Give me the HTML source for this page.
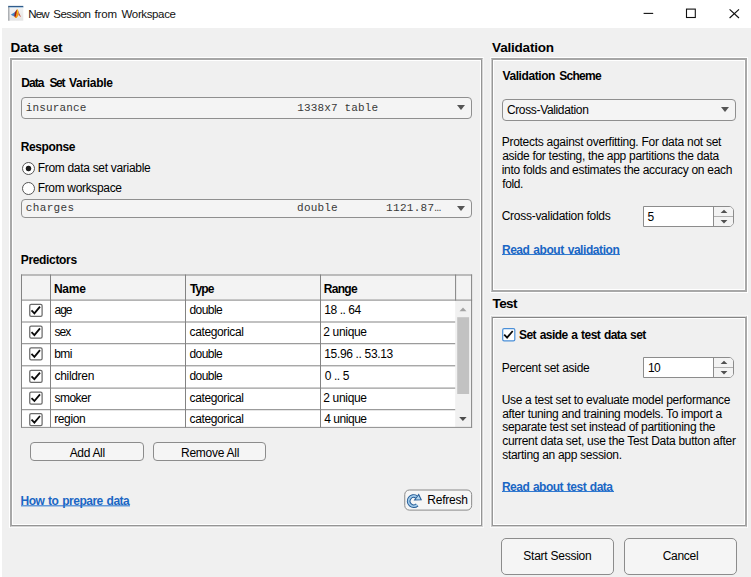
<!DOCTYPE html>
<html>
<head>
<meta charset="utf-8">
<title>New Session from Workspace</title>
<style>
html,body{margin:0;padding:0;}
body{width:751px;height:577px;overflow:hidden;background:#fff;position:relative;
  font-family:"Liberation Sans",sans-serif;font-size:12px;color:#000;}
*{box-sizing:border-box;}
.a{position:absolute;}
#content{position:absolute;left:2px;top:28px;width:749px;height:549px;background:#f0f0f0;}
.t{position:absolute;white-space:nowrap;line-height:14px;height:14px;font-size:12px;}
.ti{font-size:11.5px;color:#111;}
.b{font-weight:bold;word-spacing:0.9px;}
.h{font-size:13.5px;font-weight:bold;word-spacing:0.9px;}
.m{font-family:"Liberation Mono",monospace;font-size:11px;color:#383838;}
.lk{font-weight:bold;word-spacing:0.9px;color:#1a66c4;}
.ul{position:absolute;height:1px;background:#3079d0;}
.ul2{position:absolute;height:2px;background:linear-gradient(to bottom,rgba(40,116,208,0.7) 50%,rgba(40,116,208,0.35) 50%);}
.panel{position:absolute;border:1px solid #919191;box-shadow:inset 0 0 0 1px #fdfdfd, 0 0 0 1px #f8f8f8;}
.dd{position:absolute;border:1px solid #8f8f8f;border-radius:4px;background:#f4f4f4;}
.arrow{position:absolute;width:0;height:0;border-left:4px solid transparent;border-right:4px solid transparent;border-top:5px solid #555;}
.btn{position:absolute;border:1px solid #8c8c8c;border-radius:4px;background:#f5f5f5;}
.radio{position:absolute;width:13px;height:13px;border:1px solid #555;border-radius:50%;background:#fff;}
.radio.on{background:radial-gradient(circle at 50% 50%,#1c1c1c 0,#1c1c1c 2.4px,#fff 3.2px);}
.cb{position:absolute;width:13px;height:13px;border:1px solid #6a6a6a;border-radius:1px;background:#fff;}
.cb svg{position:absolute;left:-1px;top:-1px;}
.spin{position:absolute;border:1px solid #8c8c8c;border-radius:0 5px 5px 0;background:#fff;overflow:hidden;}
.spin .bt{position:absolute;right:0;top:0;width:20px;height:100%;background:#f3f3f3;border-left:1px solid #8c8c8c;}
.spin .mid{position:absolute;right:0;top:9px;width:19px;height:1px;background:#b0b0b0;}
.hl{position:absolute;height:1px;background:#8a8a8a;}
.vl{position:absolute;width:1px;background:#8a8a8a;}
</style>
</head>
<body>
<svg class="a" style="left:8px;top:5px" width="17" height="17" viewBox="0 0 17 17">
<defs><linearGradient id="ib" x1="0" y1="0" x2="0" y2="1"><stop offset="0" stop-color="#f4f5f6"/><stop offset="1" stop-color="#e4e4e4"/></linearGradient></defs>
<rect x="0.2" y="0.7" width="15.1" height="15" fill="url(#ib)"/>
<rect x="0.2" y="0.9" width="1.2" height="14.8" fill="#9da1a6"/>
<rect x="0.3" y="0.9" width="15" height="1.4" fill="#2f5c8c"/>
<rect x="1.5" y="2.3" width="13.8" height="0.7" fill="#b9d3e8"/>
<path d="M2.8 9.8 L7 6.9 L8.3 8.8 L6.2 11.4 Z" fill="#3f86c8"/>
<path d="M7 6.9 L9.1 4.2 L9.4 7.4 L7.9 12.2 L6.2 11.4 Z" fill="#9c1d12"/>
<path d="M9.1 4.2 L10 5 L10.9 9.8 L8.6 13.1 L6.6 13 L7.9 11 Z" fill="#f29a14"/>
<path d="M9.3 4.5 L9.9 5 L9.8 8 L9 8.3 Z" fill="#f6d21a"/>
<path d="M10 5 L11.3 8.4 L13 11.9 L11.8 11.2 L10.9 9.8 Z" fill="#c2372a"/>
</svg>
<div class="t ti" style="left:28.2px;top:7px;letter-spacing:-0.8px;">New</div>
<div class="t ti" style="left:53.3px;top:7px;letter-spacing:-0.533px;">Session</div>
<div class="t ti" style="left:94.4px;top:7px;letter-spacing:-0.067px;">from</div>
<div class="t ti" style="left:121.6px;top:7px;letter-spacing:-0.375px;">Workspace</div>
<svg class="a" style="left:640px;top:0px" width="110" height="28" viewBox="0 0 110 28">
<path d="M3.6 13.4 H13.2" stroke="#111" stroke-width="1.1" fill="none"/>
<rect x="46.5" y="9.1" width="8.8" height="8.4" stroke="#111" stroke-width="1.1" fill="none"/>
<path d="M89.6 9.3 L99 18 M99 9.3 L89.6 18" stroke="#111" stroke-width="1.15" fill="none"/>
</svg>
<div id="content"></div>
<div class="t h" style="left:10.6px;top:41px;letter-spacing:-0.229px;">Data set</div>
<div class="a" style="left:9px;top:57px;width:475px;height:471px;border:1px solid;border-color:#ffffff #f7f7f7 #fafafa #ffffff;"></div><div class="a" style="left:10px;top:58px;width:473px;height:469px;border:1px solid;border-color:#a6a6a6 #d5d5d5 #d3d3d3 #a8a8a8;"></div><div class="a" style="left:11px;top:59px;width:471px;height:467px;border:1px solid;border-color:#a6a6a6 #959595 #959595 #a8a8a8;"></div><div class="a" style="left:12px;top:60px;width:469px;height:465px;border:1px solid;border-color:#ffffff #ffffff #ffffff #ffffff;"></div>
<div class="t b" style="left:21.2px;top:76px;letter-spacing:-0.9px;">Data</div>
<div class="t b" style="left:49.4px;top:76px;letter-spacing:-1.3px;">Set</div>
<div class="t b" style="left:69.1px;top:76px;letter-spacing:-0.329px;">Variable</div>
<div class="dd" style="left:21px;top:97px;width:451px;height:22px;"></div>
<div class="t m" style="left:25.7px;top:101px;letter-spacing:0.162px;">insurance</div>
<div class="t m" style="left:297.3px;top:101px;letter-spacing:0.155px;">1338x7 table</div>
<div class="arrow" style="left:457px;top:105px;"></div>
<div class="t b" style="left:20.8px;top:140px;letter-spacing:-0.4px;">Response</div>
<div class="radio on" style="left:22px;top:162px;"></div>
<div class="t" style="left:37.7px;top:161px;letter-spacing:-0.305px;">From data set variable</div>
<div class="radio" style="left:22px;top:182px;"></div>
<div class="t" style="left:37.7px;top:181px;letter-spacing:-0.338px;">From workspace</div>
<div class="dd" style="left:21px;top:199px;width:451px;height:19px;"></div>
<div class="t m" style="left:25.7px;top:201px;letter-spacing:0.383px;">charges</div>
<div class="t m" style="left:297.1px;top:201px;letter-spacing:0.2px;">double</div>
<div class="t m" style="left:386.1px;top:201px;letter-spacing:0.3px;">1121.87…</div>
<div class="arrow" style="left:457px;top:206px;"></div>
<div class="t b" style="left:20.8px;top:253px;letter-spacing:-0.344px;">Predictors</div>
<svg class="a" style="left:16px;top:270px" width="462" height="166" viewBox="0 0 462 166"><rect x="5.5" y="5" width="450.1" height="152.1" fill="#fff"/><rect x="5.5" y="5" width="450.1" height="25.1" fill="#f3f3f3"/><rect x="439.2" y="30.6" width="16.4" height="126.8" fill="#f1f1f1"/><rect x="441.2" y="47.2" width="11.9" height="76.8" fill="#c2c2c2"/><path d="M443.5 41.2 L447 37.5 L450.5 41.2 Z" fill="#a3a3a3"/><path d="M443.2 147 L450.6 147 L446.9 150.9 Z" fill="#4d4d4d"/><rect x="5" y="4.5" width="451.1" height="1" fill="#838383"/><rect x="5" y="29.6" width="451.1" height="1" fill="#838383"/><rect x="5" y="51.5" width="434.2" height="1" fill="#838383"/><rect x="5" y="73.2" width="434.2" height="1" fill="#838383"/><rect x="5" y="95.3" width="434.2" height="1" fill="#838383"/><rect x="5" y="117.6" width="434.2" height="1" fill="#838383"/><rect x="5" y="139.2" width="434.2" height="1" fill="#838383"/><rect x="5" y="156.9" width="451.1" height="1" fill="#838383"/><rect x="5" y="4.5" width="1" height="153.4" fill="#838383"/><rect x="34" y="4.5" width="1" height="153.4" fill="#838383"/><rect x="169" y="4.5" width="1" height="153.4" fill="#838383"/><rect x="304" y="4.5" width="1" height="153.4" fill="#838383"/><rect x="439.1" y="4.5" width="1" height="26.1" fill="#838383"/><rect x="455.1" y="4.5" width="1" height="153.4" fill="#838383"/><rect x="13.75" y="34.4" width="12.35" height="12" rx="1.4" fill="#fff" stroke="#6a6a6a" stroke-width="1.25"/><path d="M15.5 40.4 L18.4 43.3 L24 36.7" stroke="#0a0a0a" stroke-width="1.8" fill="none"/><rect x="13.75" y="56.15" width="12.35" height="12" rx="1.4" fill="#fff" stroke="#6a6a6a" stroke-width="1.25"/><path d="M15.5 62.15 L18.4 65.05 L24 58.45" stroke="#0a0a0a" stroke-width="1.8" fill="none"/><rect x="13.75" y="77.9" width="12.35" height="12" rx="1.4" fill="#fff" stroke="#6a6a6a" stroke-width="1.25"/><path d="M15.5 83.9 L18.4 86.8 L24 80.2" stroke="#0a0a0a" stroke-width="1.8" fill="none"/><rect x="13.75" y="100.3" width="12.35" height="12" rx="1.4" fill="#fff" stroke="#6a6a6a" stroke-width="1.25"/><path d="M15.5 106.3 L18.4 109.2 L24 102.6" stroke="#0a0a0a" stroke-width="1.8" fill="none"/><rect x="13.75" y="122.1" width="12.35" height="12" rx="1.4" fill="#fff" stroke="#6a6a6a" stroke-width="1.25"/><path d="M15.5 128.1 L18.4 131 L24 124.4" stroke="#0a0a0a" stroke-width="1.8" fill="none"/><rect x="13.75" y="143.7" width="12.35" height="12" rx="1.4" fill="#fff" stroke="#6a6a6a" stroke-width="1.25"/><path d="M15.5 149.7 L18.4 152.6 L24 146" stroke="#0a0a0a" stroke-width="1.8" fill="none"/><rect x="0" y="157.9" width="462" height="12" fill="#f0f0f0"/></svg>
<div class="t b" style="left:53.9px;top:282px;letter-spacing:-0.233px;">Name</div>
<div class="t b" style="left:189.9px;top:282px;letter-spacing:-0.9px;">Type</div>
<div class="t b" style="left:323.8px;top:282px;letter-spacing:-0.7px;">Range</div>
<div class="t" style="left:54.5px;top:303px;letter-spacing:-1px;">age</div>
<div class="t" style="left:189.5px;top:303px;letter-spacing:-0.56px;">double</div>
<div class="t" style="left:324.3px;top:303px;letter-spacing:-0.443px;">18 .. 64</div>
<div class="t" style="left:54.5px;top:325px;letter-spacing:-0.9px;">sex</div>
<div class="t" style="left:189.5px;top:325px;letter-spacing:-0.36px;">categorical</div>
<div class="t" style="left:323.2px;top:325px;letter-spacing:-0.314px;">2 unique</div>
<div class="t" style="left:54.2px;top:347px;letter-spacing:-0.5px;">bmi</div>
<div class="t" style="left:189.5px;top:347px;letter-spacing:-0.56px;">double</div>
<div class="t" style="left:324.3px;top:347px;letter-spacing:-0.346px;">15.96 .. 53.13</div>
<div class="t" style="left:54.5px;top:369px;letter-spacing:-0.314px;">children</div>
<div class="t" style="left:189.5px;top:369px;letter-spacing:-0.56px;">double</div>
<div class="t" style="left:324.7px;top:369px;letter-spacing:-0.4px;">0 .. 5</div>
<div class="t" style="left:54.5px;top:391px;letter-spacing:-0.54px;">smoker</div>
<div class="t" style="left:189.5px;top:391px;letter-spacing:-0.36px;">categorical</div>
<div class="t" style="left:323.2px;top:391px;letter-spacing:-0.314px;">2 unique</div>
<div class="t" style="left:54.2px;top:412px;letter-spacing:-0.38px;">region</div>
<div class="t" style="left:189.5px;top:412px;letter-spacing:-0.36px;">categorical</div>
<div class="t" style="left:324.2px;top:412px;letter-spacing:-0.457px;">4 unique</div>
<div class="btn" style="left:30px;top:442px;width:114px;height:19px;"></div>
<div class="btn" style="left:153px;top:442px;width:113px;height:19px;"></div>
<div class="t" style="left:69.7px;top:446px;letter-spacing:-0.333px;">Add All</div>
<div class="t" style="left:181px;top:446px;letter-spacing:-0.256px;">Remove All</div>
<div class="t lk" style="left:20.5px;top:494px;letter-spacing:-0.489px;">How to prepare data</div>
<div class="ul2" style="left:21px;top:505px;width:109px;"></div>
<svg class="a" style="left:400px;top:486px" width="76" height="30" viewBox="0 0 76 30">
<rect x="4.75" y="4" width="66.9" height="20.1" rx="4.6" fill="#f6f6f6" stroke="#8a8a8a" stroke-width="1"/>
<path d="M16.35 10.77 A5.05 5.05 0 1 0 17.19 18.79" stroke="#245a94" stroke-width="3.8" fill="none"/>
<path d="M18.8 7.4 L22 14.3 L13.6 14.5 Z" fill="#245a94"/>
<path d="M16.35 10.77 A5.05 5.05 0 1 0 17.19 18.79" stroke="#9fc9ea" stroke-width="1.9" fill="none"/>
<path d="M18.5 9.6 L20.5 13.5 L15.6 13.6 Z" fill="#b5d8f1"/>
</svg>
<div class="t" style="left:427.3px;top:493px;letter-spacing:-0.217px;">Refresh</div>
<div class="t h" style="left:492.1px;top:41px;letter-spacing:-0.2px;">Validation</div>
<div class="a" style="left:490px;top:57px;width:258px;height:236px;border:1px solid;border-color:#ffffff #ffffff #ffffff #f8f8f8;"></div><div class="a" style="left:491px;top:58px;width:256px;height:234px;border:1px solid;border-color:#a6a6a6 #a8a8a8 #a8a8a8 #c8c8c8;"></div><div class="a" style="left:492px;top:59px;width:254px;height:232px;border:1px solid;border-color:#a6a6a6 #a8a8a8 #a8a8a8 #989898;"></div><div class="a" style="left:493px;top:60px;width:252px;height:230px;border:1px solid;border-color:#ffffff #ffffff #ffffff #ffffff;"></div>
<div class="t b" style="left:502.5px;top:69px;letter-spacing:-0.422px;">Validation</div>
<div class="t b" style="left:559.3px;top:69px;letter-spacing:-0.74px;">Scheme</div>
<div class="dd" style="left:502px;top:99px;width:234px;height:22px;"></div>
<div class="t" style="left:506.9px;top:103px;letter-spacing:-0.347px;">Cross-Validation</div>
<div class="arrow" style="left:721px;top:107px;"></div>
<div class="t" style="left:501.7px;top:135px;letter-spacing:-0.276px;">Protects against overfitting. For data not set</div>
<div class="t" style="left:502.2px;top:149px;letter-spacing:-0.293px;">aside for testing, the app partitions the data</div>
<div class="t" style="left:501.7px;top:163px;letter-spacing:-0.289px;">into folds and estimates the accuracy on each</div>
<div class="t" style="left:502.2px;top:177px;letter-spacing:-0.375px;">fold.</div>
<div class="t" style="left:501.7px;top:209px;letter-spacing:-0.271px;">Cross-validation folds</div>
<div class="spin" style="left:643px;top:206px;width:91px;height:21px;"><div class="bt"></div><div class="mid"></div></div>
<svg class="a" style="left:719px;top:207px" width="10" height="20" viewBox="0 0 10 20"><path d="M1.6 6.1 L5 2.7 L8.4 6.1 Z M1.6 12.9 L8.4 12.9 L5 16.4 Z" fill="#505050"/></svg>
<div class="t" style="left:647.4px;top:210px;">5</div>
<div class="t lk" style="left:501.9px;top:243px;letter-spacing:-0.43px;">Read about validation</div>
<div class="ul" style="left:502px;top:254px;width:118px;"></div>
<div class="t h" style="left:492.6px;top:297px;letter-spacing:-0.633px;">Test</div>
<div class="a" style="left:490px;top:315px;width:258px;height:213px;border:1px solid;border-color:#f8f8f8 #ffffff #fafafa #f8f8f8;"></div><div class="a" style="left:491px;top:316px;width:256px;height:211px;border:1px solid;border-color:#dcdcdc #a8a8a8 #d3d3d3 #c8c8c8;"></div><div class="a" style="left:492px;top:317px;width:254px;height:209px;border:1px solid;border-color:#848484 #a8a8a8 #959595 #989898;"></div><div class="a" style="left:493px;top:318px;width:252px;height:207px;border:1px solid;border-color:#ffffff #ffffff #ffffff #ffffff;"></div>
<svg class="a" style="left:498px;top:324px" width="22" height="22" viewBox="0 0 22 22"><rect x="4.7" y="4.7" width="12.1" height="12.1" rx="1.4" fill="#fff" stroke="#4a8fd8" stroke-width="1.2"/><path d="M6.2 10.7 L9.1 13.6 L14.7 7" stroke="#0a0a0a" stroke-width="1.8" fill="none"/></svg>
<div class="t b" style="left:519px;top:328px;letter-spacing:-0.554px;">Set aside a test data set</div>
<div class="t" style="left:501.7px;top:361px;letter-spacing:-0.294px;">Percent set aside</div>
<div class="spin" style="left:643px;top:357px;width:91px;height:21px;"><div class="bt"></div><div class="mid"></div></div>
<svg class="a" style="left:719px;top:358px" width="10" height="20" viewBox="0 0 10 20"><path d="M1.6 6.1 L5 2.7 L8.4 6.1 Z M1.6 12.9 L8.4 12.9 L5 16.4 Z" fill="#505050"/></svg>
<div class="t" style="left:648px;top:361px;letter-spacing:-0.7px;">10</div>
<div class="t" style="left:501.7px;top:393px;letter-spacing:-0.312px;">Use a test set to evaluate model performance</div>
<div class="t" style="left:502.2px;top:407px;letter-spacing:-0.316px;">after tuning and training models. To import a</div>
<div class="t" style="left:502.2px;top:420px;letter-spacing:-0.293px;">separate test set instead of partitioning the</div>
<div class="t" style="left:502.2px;top:434px;letter-spacing:-0.287px;">current data set, use the Test Data button after</div>
<div class="t" style="left:502.2px;top:448px;letter-spacing:-0.3px;">starting an app session.</div>
<div class="t lk" style="left:501.9px;top:480px;letter-spacing:-0.505px;">Read about test data</div>
<div class="ul" style="left:502px;top:491px;width:112px;"></div>
<div class="btn" style="left:501px;top:538px;width:113px;height:37px;border-radius:5px;"></div>
<div class="btn" style="left:624px;top:538px;width:113px;height:37px;border-radius:5px;"></div>
<div class="t" style="left:523.3px;top:549px;letter-spacing:-0.25px;">Start Session</div>
<div class="t" style="left:662.7px;top:549px;letter-spacing:-0.28px;">Cancel</div>
</body>
</html>
